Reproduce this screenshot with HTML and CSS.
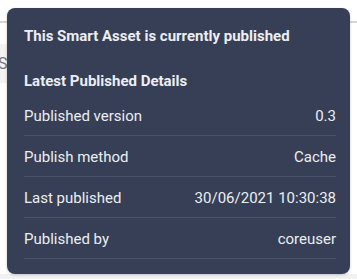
FILE: index.html
```html
<!DOCTYPE html>
<html lang="en">
<head>
    <title>Publish details</title>
    <link rel="stylesheet" href="styles.css">
</head>
<body>
    <div class="page">
        <div class="topbar"></div>
        <div class="side-box">S</div>
        <div class="footer-strip"></div>
    </div>

    <div class="tooltip">
        <h1 class="title">This Smart Asset is currently published</h1>
        <h2 class="subtitle">Latest Published Details</h2>
        <ul class="details">
            <li class="row"><span>Published version</span><span>0.3</span></li>
            <li class="row"><span>Publish method</span><span>Cache</span></li>
            <li class="row"><span>Last published</span><span>30/06/2021 10:30:38</span></li>
            <li class="row"><span>Published by</span><span>coreuser</span></li>
        </ul>
    </div>
</body>
</html>
```

FILE: styles.css
```css
body {
    margin: 0;
    width: 357px;
    height: 279px;
    overflow: hidden;
    font-family: Roboto, "Liberation Sans", sans-serif;
    background-color: #fff;
    position: relative;
}

.page {
    height: 279px;
    display: flex;
    flex-direction: column;
}

.topbar {
    height: 21px;
    border-bottom: 2px solid #d6d6d6;
}

.side-box {
    margin-top: 21px;
    height: 39px;
    width: 40px;
    background-color: #f3f3f3;
    color: #777;
    font-size: 16px;
    line-height: 39px;
    text-indent: -2px;
}

.footer-strip {
    margin-top: auto;
    height: 5px;
    background-color: #f1f1f1;
}

/* popover sits above the page */
.tooltip {
    position: absolute;
    left: 7px;
    top: 8px;
    width: 343px;
    height: 266px;
    box-sizing: border-box;
    padding: 19px 14px 0 17px;
    background-color: #363f56;
    border-radius: 8px;
    color: #eceef2;
    box-shadow: 0 1px 3px rgba(0, 0, 0, 0.2);
}

.title,
.subtitle {
    margin: 0;
    font-size: 15px;
    font-weight: 700;
    line-height: 18px;
}

.subtitle {
    margin-top: 27px;
}

.details {
    list-style-type: none;
    padding: 0;
    margin: 5px 0 0;
}

.row {
    display: flex;
    justify-content: space-between;
    align-items: center;
    height: 38px;
    padding-top: 2px;
    font-size: 15px;
    border-bottom: 1px solid #4a536a;
}
```
